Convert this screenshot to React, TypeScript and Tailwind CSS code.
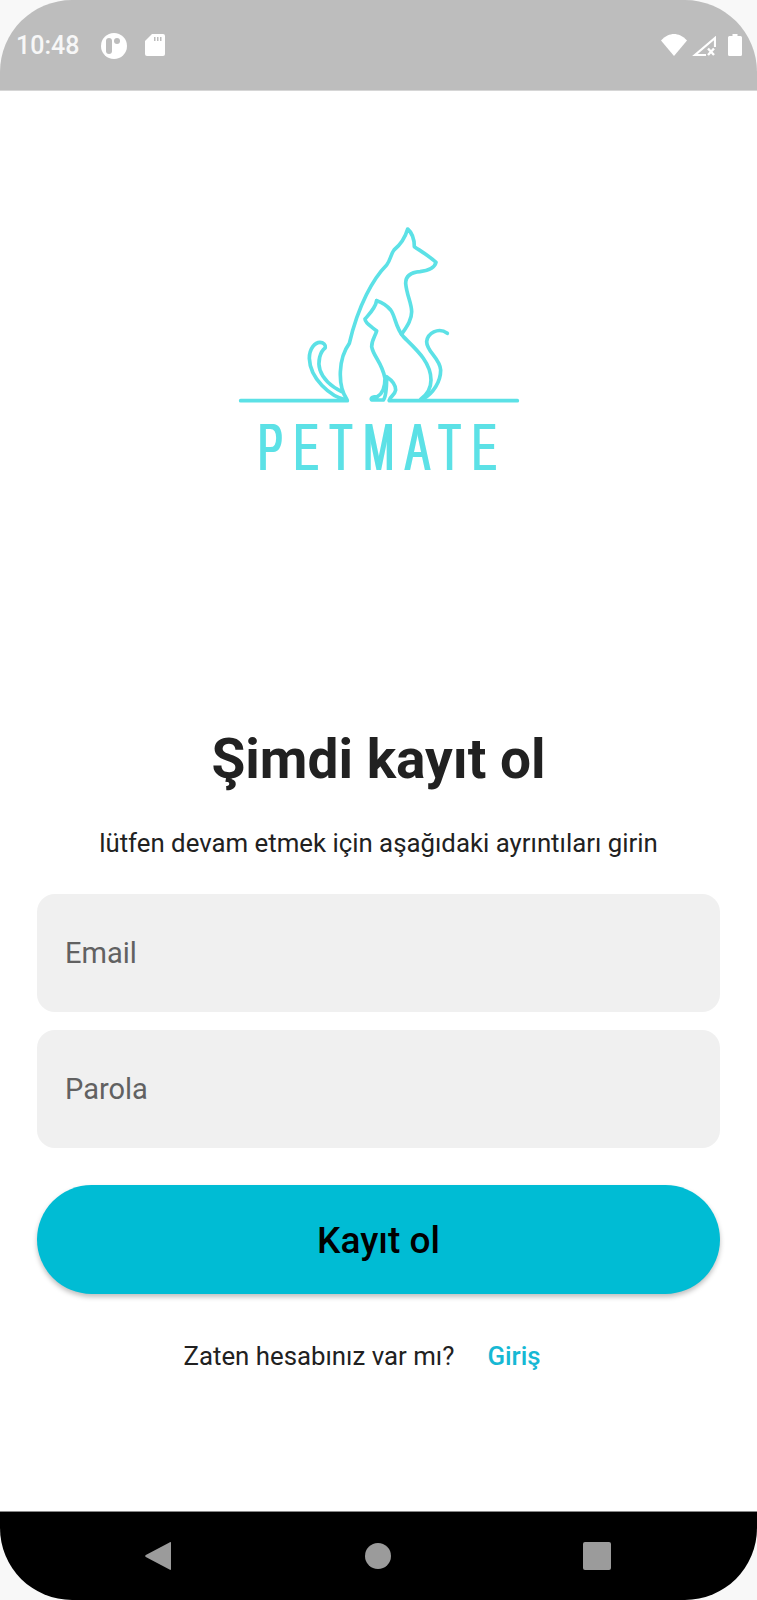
function StatusBar() {
  return (
    <div className="flex h-[91px] items-start justify-between rounded-t-[72px] border-b border-[#d6d6d6] bg-[#bdbdbd] pr-[15px] pl-[16px] pt-[33px]">
      <div className="flex items-start">
        <span className="w-[64px] text-[25px] leading-[26px] font-medium text-[#f7f7f7]">10:48</span>
        <svg className="ml-[21px]" width="26" height="26" viewBox="0 0 26 26">
          <circle cx="13" cy="13" r="13" fill="#fff" />
          <rect x="5" y="5" width="6" height="16" rx="3" fill="#bdbdbd" />
          <circle cx="16" cy="8" r="3" fill="#bdbdbd" />
        </svg>
        <svg className="ml-[18px] mt-[1px]" width="20" height="22" viewBox="0 0 20 22">
          <path d="M7 0h11a2 2 0 0 1 2 2v18a2 2 0 0 1-2 2H2a2 2 0 0 1-2-2V7z" fill="#fff" />
          <path d="M9 3h1.500v4H9zM12 3h1.500v4H12zM15 3h1.500v4H15z" fill="#bdbdbd" />
        </svg>
      </div>
      <div className="flex items-start">
        <svg className="mt-[1px]" width="26" height="22" viewBox="0 0 26 22">
          <path d="M13 22 0 6.500C4 2 9 0 13 0s9 2 13 6.500z" fill="#fff" />
        </svg>
        <svg className="ml-[5px] mt-[3px]" width="24" height="20" viewBox="0 0 24 20" fill="none" stroke="#fff" strokeWidth="2.200">
          <path d="M23 11V2L3 19H14" />
          <path d="M16 12.500l6 6.500M22 12.500l-6 6.500" strokeWidth="2.400" />
        </svg>
        <svg className="ml-[12px] mt-[1px]" width="14" height="22" viewBox="0 0 14 22">
          <path d="M4.500 0h5v2h3A1.500 1.500 0 0 1 14 3.500V20.500A1.500 1.500 0 0 1 12.500 22h-11A1.500 1.500 0 0 1 0 20.500V3.500A1.500 1.500 0 0 1 1.500 2h3z" fill="#fff" />
        </svg>
      </div>
    </div>
  );
}

function Logo() {
  return (
    <div className="ml-[3px] flex h-[270px] w-[300px] flex-col items-center">
      <svg width="300" height="200" viewBox="0 0 900 600" fill="none" stroke="#5ce1e6" strokeWidth="11" strokeLinecap="round" strokeLinejoin="round">
        <path d="M32 557H352M478 557H862" />
        {/* dog */}
        <path d="M350 552C322 510 325 430 358 385C385 270 430 190 470 150C483 132 482 118 492 105C510 90 525 70 533 42C548 55 553 75 553 95C575 110 600 125 618 142C615 155 605 165 570 170C540 172 527 185 527 205C530 240 545 265 545 290C545 315 530 335 515 358" />
        {/* dog tail */}
        <path d="M350 555C300 545 240 490 238 430C238 400 255 382 270 382C280 382 288 390 286 398C270 410 262 440 270 465C280 495 305 515 335 530" />
        {/* cat */}
        <path d="M440 257C455 262 470 270 482 285C497 305 495 335 520 365C555 400 603 440 603 495C603 520 590 540 572 553" />
        <path d="M440 257C436 280 420 295 405 312C405 325 425 335 440 348C435 365 425 375 425 395C430 425 455 440 465 490C465 515 460 535 442 545C430 545 420 548 425 555H460C468 545 470 520 470 485C485 495 497 510 497 525C495 540 480 545 478 555" />
        {/* cat tail */}
        <path d="M578 553C610 535 632 500 632 465C630 430 590 410 590 380C592 355 625 335 652 355" />
      </svg>
      <span className="mt-[4px] scale-x-[0.55] whitespace-nowrap pl-[8px] font-['Liberation_Sans',sans-serif] text-[66px] leading-[56px] tracking-[21px] text-[#5ce1e6] [text-shadow:4px_0_0_#5ce1e6]">
        PETMATE
      </span>
    </div>
  );
}

function NavBar() {
  return (
    <div className="flex h-[89px] items-start justify-between rounded-b-[72px] border-t border-[#888888] bg-black pt-[29px] pr-[146px] pl-[145px]">
      <svg width="26" height="30" viewBox="0 0 26 30">
        <path d="M24.500 1.500C25.500 .8 26 1 26 2V28C26 29 25.500 29.200 24.500 28.500L.8 16C0 15.500 0 14.500 .8 14z" fill="#9b9b9b" />
      </svg>
      <div className="ml-[2px] mt-[2px] h-[26px] w-[26px] rounded-full bg-[#9b9b9b]" />
      <div className="mt-[1px] h-[28px] w-[28px] rounded-[2px] bg-[#9b9b9b]" />
    </div>
  );
}

export default function App() {
  return (
    <div className="flex h-[1600px] w-[757px] flex-col overflow-hidden bg-[#f8f8f8] font-['Roboto',sans-serif]">
      <StatusBar />
      <div className="flex flex-1 flex-col items-center bg-white px-[37px]">
        <div className="mt-[124px]">
          <Logo />
        </div>
        <h1 className="mt-[244px] text-[55px] leading-[60px] font-bold text-[#212121]">Şimdi kayıt ol</h1>
        <p className="mt-[38px] text-[25.800px] leading-[32px] text-[#212121]">lütfen devam etmek için aşağıdaki ayrıntıları girin</p>
        <div className="mt-[35px] flex h-[118px] w-full items-center rounded-[18px] bg-[#f0f0f0] px-[28px] pt-[2px] text-[29px] text-[#616161]">Email</div>
        <div className="mt-[18px] flex h-[118px] w-full items-center rounded-[18px] bg-[#f0f0f0] px-[28px] pt-[2px] text-[29px] text-[#616161]">Parola</div>
        <button className="mt-[37px] h-[109px] w-full rounded-full bg-[#00bcd4] pt-[2px] text-[37px] font-medium text-black shadow-[0_3px_5px_rgba(0,0,0,0.25)]">Kayıt ol</button>
        <div className="mt-[46px] flex items-center pr-[33px] text-[25.800px] leading-[32px]">
          <span className="text-[#212121]">Zaten hesabınız var mı?</span>
          <span className="ml-[33px] font-medium text-[#16b8d4]">Giriş</span>
        </div>
      </div>
      <NavBar />
    </div>
  );
}
